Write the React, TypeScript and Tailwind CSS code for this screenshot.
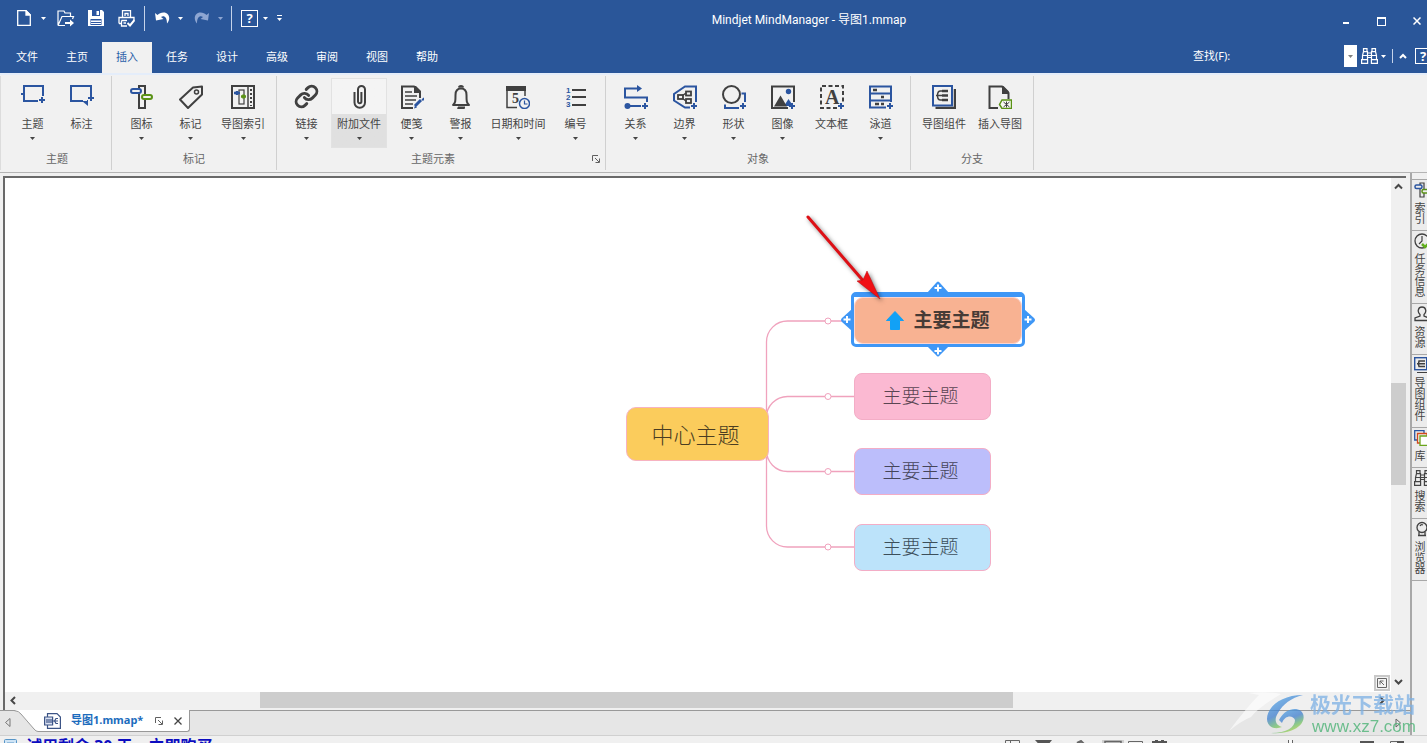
import type { ReactNode } from "react";
import { Link as LinkIcon } from "lucide-react";

const BLUE = "#2b55a0";
const DARK = "#404040";
const GREEN = "#5a9216";

function Caret({ className = "" }: { className?: string }) {
  return (
    <svg width="5" height="3" viewBox="0 0 5 3" className={className} aria-hidden="true">
      <path d="M0 0H5L2.500 3Z" fill="currentColor" />
    </svg>
  );
}

function Icon({ size = 24, children }: { size?: number; children: ReactNode }) {
  return (
    <svg
      width={size}
      height={size}
      viewBox={`0 0 ${size} ${size}`}
      fill="none"
      stroke={DARK}
      strokeWidth="2"
      className="shrink-0"
      aria-hidden="true"
    >
      {children}
    </svg>
  );
}

function Plus({ x = 21, y = 21 }: { x?: number; y?: number }) {
  return <path d={`M${x - 3} ${y}h6M${x} ${y - 3}v6`} stroke={BLUE} />;
}

const icons = {
  topic: (
    <Icon>
      <path d="M17 16H3V1H22V11M0 9h3" stroke={BLUE} />
      <Plus x={21} y={15} />
    </Icon>
  ),
  callout: (
    <Icon>
      <path d="M13 16H1V1H21V10M17 16h1" stroke={BLUE} />
      <path d="M12 16h6v5z" fill={BLUE} stroke="none" />
      <Plus x={21} y={13} />
    </Icon>
  ),
  marker: (
    <Icon>
      <path d="M9 5V1h6v8M9 8v15h6V15" />
      <rect x="1" y="4" width="10" height="4" rx="2" stroke={BLUE} />
      <rect x="12" y="10" width="10" height="4" rx="2" stroke={GREEN} />
    </Icon>
  ),
  tag: (
    <Icon>
      <path d="M23 1.500V9.500L9 23L1 14.500L14 2.500Z" strokeLinejoin="round" />
      <circle cx="17.500" cy="7" r="2" strokeWidth="1.500" />
    </Icon>
  ),
  mapIndex: (
    <Icon>
      <rect x="1" y="1" width="22" height="22" />
      <path d="M17 2v20" strokeWidth="1.500" />
      <path d="M20 4v17" strokeDasharray="2 2" />
      <rect x="8" y="5" width="5" height="14" strokeWidth="1.200" />
      <path d="M3 8h6M6 6v4" stroke={BLUE} strokeWidth="2.500" />
      <path d="M10 11.500h5M12.500 9.500v4" stroke={GREEN} strokeWidth="2.500" />
    </Icon>
  ),
  link: <LinkIcon size={25} strokeWidth={2.8} color={DARK} aria-hidden="true" />,
  clip: (
    <Icon>
      <path d="M7.500 7v10.500a5 5 0 0 0 10.500 0V4.500a3.500 3.500 0 0 0-7 0v12a1.700 1.700 0 0 0 3.400 0V7" />
    </Icon>
  ),
  note: (
    <Icon>
      <path d="M20 13V7.500L14 1.500H2V23H13" />
      <path d="M14 1h2l5 5v2h-7z" fill={DARK} stroke="none" />
      <path d="M5 7h7M5 11h12M5 15h11M5 19h8" strokeWidth="1.500" />
      <path d="M22.500 13.500l1.500 1.500M21 15l-6 6" stroke={BLUE} strokeWidth="3" />
      <path d="M14 23.500l1-3 2 2z" fill={BLUE} stroke="none" />
    </Icon>
  ),
  bell: (
    <Icon>
      <path d="M4 20H20C17.500 18 17.500 16 17.500 10C17.500 5.500 15.500 3.500 12 3.500C8.500 3.500 6.500 5.500 6.500 10C6.500 16 6.500 18 4 20Z" strokeLinejoin="round" />
      <path d="M10 2.500a2 1.500 0 0 1 4 0M9 22.500h6a3 1.500 0 0 1-6 0" fill={DARK} />
    </Icon>
  ),
  calendar: (
    <Icon>
      <path d="M0 1h20v5H0z" fill={DARK} stroke="none" />
      <path d="M1 6V22.500H11M19 6v5" strokeWidth="1.500" />
      <text x="6" y="18" fontSize="14" fontWeight="bold" fontFamily="Liberation Serif, serif" fill={DARK} stroke="none">5</text>
      <circle cx="18.500" cy="18.500" r="5" stroke={BLUE} strokeWidth="1.500" fill="#f1f1f1" />
      <path d="M18.500 15.500v3.500h3" stroke={BLUE} strokeWidth="1.200" />
    </Icon>
  ),
  numbering: (
    <Icon>
      <path d="M8 5H22M8 12H22M8 20H22" />
      <g fontSize="8" fontWeight="bold" fontFamily="Liberation Sans, sans-serif" fill={BLUE} stroke="none">
        <text x="2" y="8">1</text>
        <text x="2" y="15">2</text>
        <text x="2" y="22">3</text>
      </g>
    </Icon>
  ),
  relation: (
    <Icon>
      <path d="M14 3.500H1V12.500H23V17M4 21H17" stroke={BLUE} />
      <path d="M13 0l5 3.500l-5 3.500z" fill={BLUE} stroke="none" />
      <circle cx="3.500" cy="21" r="3" fill={BLUE} stroke="none" />
      <Plus />
    </Icon>
  ),
  boundary: (
    <Icon>
      <path d="M17 22.500H12L1 15.500V9L12 1.500H23V17" stroke={BLUE} />
      <rect x="5" y="10" width="5" height="4" strokeWidth="1.800" />
      <rect x="13" y="6.500" width="5" height="4" strokeWidth="1.800" />
      <rect x="13" y="14" width="5" height="4" strokeWidth="1.800" />
      <path d="M9 11l4-3M9 13l4 3" strokeWidth="1.500" />
      <Plus />
    </Icon>
  ),
  shape: (
    <Icon>
      <circle cx="9.500" cy="9.500" r="8.500" />
      <path d="M19.500 8.500H23V17M3 19.500V23H17" stroke={BLUE} />
      <Plus />
    </Icon>
  ),
  image: (
    <Icon>
      <path d="M17 23H1V1.500H23V17" />
      <circle cx="17.500" cy="6.500" r="2.700" fill={BLUE} stroke="none" />
      <path d="M13 21l4.500-7l4 6v1z" fill={BLUE} stroke="none" />
      <path d="M3 21.500L9.500 10.500L16 21.500Z" fill={DARK} stroke="none" />
      <Plus />
    </Icon>
  ),
  textBox: (
    <Icon>
      <path d="M17 23H1V1H23V17" strokeDasharray="4 2.500" />
      <text x="5" y="19" fontSize="20" fontWeight="bold" fontFamily="Liberation Serif, serif" fill={DARK} stroke="none">A</text>
      <Plus />
    </Icon>
  ),
  swimlane: (
    <Icon>
      <path d="M17 22.500H1V1.500H22V17M1 8.500H22M1 15.500H22" stroke={BLUE} />
      <path d="M4 5h4M12 12h3M6 19h4M12 19h3" strokeWidth="2.500" />
      <Plus />
    </Icon>
  ),
  mapParts: (
    <Icon>
      <path d="M3.500 23H23V4" strokeWidth="2.500" />
      <rect x="1" y="1" width="19" height="19.500" stroke={BLUE} />
      <path d="M10 6H8.500C6 6 5.500 8 5.500 10.500S6 15 8.500 15H10M4 10.500h6" strokeWidth="1.500" />
      <path d="M10 6h6M10 10.500h6M10 15h6" strokeWidth="2.500" />
    </Icon>
  ),
  insertMap: (
    <Icon>
      <path d="M10 23H1.500V1.500H14L20.500 8V14" />
      <path d="M14 1h1.500L21 6.500V9h-7z" fill={DARK} stroke="none" />
      <path d="M11.500 19.500l2.500-4.500h9.500v8.500H14z" stroke={GREEN} strokeWidth="1.500" fill="#f8fbf2" />
      <path d="M18.500 16.500v6M15.500 17l6 5M21.500 17l-6 5" strokeWidth="1" />
    </Icon>
  ),
};

type Tool = { label: string; icon: ReactNode; menu?: boolean; width: string; hot?: boolean };
const W2 = "w-[49px]";
const W4 = "w-[56px]";
const groups: { name: string; tools: Tool[]; launcher?: boolean }[] = [
  {
    name: "主题",
    tools: [
      { label: "主题", icon: icons.topic, menu: true, width: W2 },
      { label: "标注", icon: icons.callout, width: W2 },
    ],
  },
  {
    name: "标记",
    tools: [
      { label: "图标", icon: icons.marker, menu: true, width: W2 },
      { label: "标记", icon: icons.tag, menu: true, width: W2 },
      { label: "导图索引", icon: icons.mapIndex, menu: true, width: W4 },
    ],
  },
  {
    name: "主题元素",
    launcher: true,
    tools: [
      { label: "链接", icon: icons.link, menu: true, width: W2 },
      { label: "附加文件", icon: icons.clip, menu: true, width: W4, hot: true },
      { label: "便笺", icon: icons.note, menu: true, width: W2 },
      { label: "警报", icon: icons.bell, menu: true, width: W2 },
      { label: "日期和时间", icon: icons.calendar, menu: true, width: "w-[66px]" },
      { label: "编号", icon: icons.numbering, menu: true, width: W2 },
    ],
  },
  {
    name: "对象",
    tools: [
      { label: "关系", icon: icons.relation, menu: true, width: W2 },
      { label: "边界", icon: icons.boundary, menu: true, width: W2 },
      { label: "形状", icon: icons.shape, menu: true, width: W2 },
      { label: "图像", icon: icons.image, menu: true, width: W2 },
      { label: "文本框", icon: icons.textBox, width: W2 },
      { label: "泳道", icon: icons.swimlane, menu: true, width: W2 },
    ],
  },
  {
    name: "分支",
    tools: [
      { label: "导图组件", icon: icons.mapParts, width: W4 },
      { label: "插入导图", icon: icons.insertMap, width: W4 },
    ],
  },
];

function Launcher() {
  return (
    <svg width="8" height="8" viewBox="0 0 8 8" fill="none" stroke="#606060" aria-hidden="true">
      <path d="M0.500 6V0.500H6M3 3l4 4M7.500 3.500v4h-4" />
    </svg>
  );
}

function QuickAccess() {
  return (
    <div className="flex h-9 w-[290px] items-center pl-[10px]">
      <button aria-label="新建" className="flex w-7 justify-center">
        <svg width="14" height="16" viewBox="0 0 14 16" fill="none" stroke="#fff" strokeWidth="1.300" aria-hidden="true">
          <path d="M0.700 0.700H9L13.300 5V15.300H0.700Z" />
          <path d="M9 0.700V5H13.300Z" fill="#fff" />
        </svg>
      </button>
      <button aria-label="新建选项" className="flex w-[10px] justify-center"><Caret /></button>
      <button aria-label="打开" className="flex w-9 justify-center">
        <svg width="18" height="17" viewBox="0 0 18 17" fill="none" stroke="#fff" strokeWidth="1.200" aria-hidden="true">
          <path d="M1 15.500V1H7L8 3H13.500V6M1 15.500L5 6.500H16.500L15.500 9M1 15.500H8" />
          <path d="M8 12h5v-2.500l4 3.500l-4 3.500v-2.500H8z" fill="#fff" stroke="none" />
        </svg>
      </button>
      <button aria-label="保存" className="flex w-6 justify-center">
        <svg width="16" height="16" viewBox="0 0 16 16" aria-hidden="true">
          <path d="M0 0H14L16 2V16H0Z" fill="#fff" />
          <path d="M4 0H12V6H4ZM2.500 9H13.500V15H2.500Z" fill={BLUE} />
          <path d="M8.500 1h2.500v4h-2.500zM3 10.500h10v1.500H3zM3 13h10v1H3z" fill="#fff" />
        </svg>
      </button>
      <button aria-label="打印" className="flex w-9 justify-center">
        <svg width="17" height="17" viewBox="0 0 17 17" fill="none" stroke="#fff" strokeWidth="1.300" aria-hidden="true">
          <path d="M4.500 7V0.700H12.500V7M1 13.500V7.500H16V10M1 13.500H3M3.500 10.500H9M3.500 10.500V16H9M7 6V3.500H10V6M5.500 13H8" />
          <path d="M9.500 13l2.500 2.500L16.500 10" strokeWidth="2" />
        </svg>
      </button>
      <span className="mr-[3px] h-[25px] w-px bg-[#c5d3ea]" />
      <button aria-label="撤消" className="flex w-7 justify-center">
        <svg width="15" height="13" viewBox="0 0 15 13" aria-hidden="true">
          <path d="M0 1L1 8.500L8.500 7L6 5C9 3 12 5 12 11.500C16 7 14.500 0.500 8.500 0.500C6 0.500 4 1.500 2.500 3Z" fill="#fff" />
        </svg>
      </button>
      <button aria-label="撤消列表" className="flex w-2 justify-center"><Caret /></button>
      <button aria-label="重做" className="flex w-[34px] justify-center">
        <svg width="15" height="13" viewBox="0 0 15 13" aria-hidden="true">
          <path d="M15 1L14 8.500L6.500 7L9 5C6 3 3 5 3 11.500C-1 7 0.500 0.500 6.500 0.500C9 0.500 11 1.500 12.500 3Z" fill="#8ea6d2" />
        </svg>
      </button>
      <button aria-label="重做列表" className="flex w-1 justify-center text-[#8ea6d2]"><Caret className="shrink-0" /></button>
      <span className="mr-[9px] ml-[9px] h-[25px] w-px bg-[#c5d3ea]" />
      <button aria-label="帮助" className="grid h-[17px] w-[17px] place-items-center border border-white text-[13px] leading-[13px] font-bold">?</button>
      <button aria-label="帮助选项" className="flex w-[14px] justify-center"><Caret /></button>
      <button aria-label="自定义快速访问工具栏" className="flex w-[14px] flex-col items-center gap-[2px]">
        <span className="h-px w-[5px] bg-white" />
        <Caret />
      </button>
    </div>
  );
}

function Binoculars({ stroke }: { stroke: string }) {
  return (
    <svg width="17" height="16" viewBox="0 0 17 16" fill="none" stroke={stroke} strokeWidth="1.200" className="shrink-0" aria-hidden="true">
      <path d="M2.500 0.600h3.500v3h-3.500zM11 0.600h3.500v3h-3.500zM1.500 11.600v-4l1-4h4v8M15.500 11.600v-4l-1-4h-4v8M0.600 11.600h6v3.800h-6zM10.400 11.600h6v3.800h-6zM6.500 5h4v4.500h-4zM1.500 7.500h14" />
    </svg>
  );
}

const tabs = ["文件", "主页", "插入", "任务", "设计", "高级", "审阅", "视图", "帮助"];

function Header() {
  return (
    <header className="shrink-0 bg-[#2a5699] text-white">
      <div className="flex h-[42px] items-start">
        <QuickAccess />
        <h1 className="flex-1 pt-3 text-center font-['Roboto','Noto_Sans_CJK_SC',sans-serif] text-xs leading-4 font-normal">
          Mindjet MindManager - 导图1.mmap
        </h1>
        <div className="flex h-[42px] w-[107px] items-center">
          <button aria-label="最小化" className="flex w-9 justify-center pt-1"><span className="h-[2px] w-[6px] bg-white" /></button>
          <button aria-label="最大化" className="flex w-9 justify-center"><span className="h-[9px] w-[9px] border border-t-2 border-white" /></button>
          <button aria-label="关闭" className="flex w-9 justify-center">
            <svg width="8" height="8" viewBox="0 0 8 8" stroke="#fff" strokeWidth="1.500" aria-hidden="true"><path d="M0.500 0.500l7 7M7.500 0.500l-7 7" /></svg>
          </button>
        </div>
      </div>
      <div className="flex h-[31px] items-stretch justify-between">
        <nav className="flex pl-[2px] text-[11px]">
          {tabs.map((t) => (
            <button key={t} className={t === "插入" ? "w-[50px] bg-[#f1f1f1] pb-[1px] text-[#2a5ea8]" : "w-[50px] pb-[1px]"}>
              {t}
            </button>
          ))}
        </nav>
        <div className="flex items-center pb-[3px]">
          <label htmlFor="find" className="w-[47px] text-[11px]">查找(F):</label>
          <input id="find" className="h-[22px] w-[104px] bg-transparent px-1 text-[11px] outline-none" />
          <button aria-label="查找历史" className="flex h-[22px] w-[13px] items-center justify-center bg-white text-[#808080]"><Caret /></button>
          <button aria-label="查找" className="ml-1"><Binoculars stroke="#fff" /></button>
          <button aria-label="查找选项" className="ml-[3px]"><Caret /></button>
          <span className="mx-[6px] h-[14px] w-px bg-[#c5d3ea]" />
          <button aria-label="折叠功能区">
            <svg width="8" height="6" viewBox="0 0 8 6" fill="none" stroke="#fff" strokeWidth="2" aria-hidden="true"><path d="M1 5l3-3l3 3" /></svg>
          </button>
          <button aria-label="帮助主题" className="ml-2 grid h-4 w-4 place-items-center border border-white text-[13px] leading-[13px] font-bold">?</button>
          <span className="w-[4px]" />
        </div>
      </div>
    </header>
  );
}

function Ribbon() {
  return (
    <div className="flex h-[100px] shrink-0 border-t-2 border-b border-t-[#e4edfa] border-b-[#b4b4b4] bg-[#f1f1f1] pt-[1px] pb-[2px]">
      <div className="w-[3px] border-l border-[#dcdcdc]" />
      {groups.map((g) => (
        <section key={g.name} className="relative flex flex-col border-r border-[#d0d0d0] px-[5px]">
          <div className="flex pt-[2px]">
            {g.tools.map((t) => (
              <button
                key={t.label}
                className={
                  t.hot
                    ? `${t.width} flex h-[70px] flex-col items-center border border-[#e2e2e2] bg-linear-to-b from-[#f4f4f4] from-52% to-[#e0e0e0] to-52% text-[11px] text-[#444]`
                    : `${t.width} flex h-[70px] flex-col items-center border border-transparent text-[11px] text-[#444]`
                }
              >
                <span className="flex h-[37px] items-center justify-center pb-[2px]">{t.icon}</span>
                <span className="leading-4 whitespace-nowrap">{t.label}</span>
                {t.menu && <Caret className="mt-[5px]" />}
              </button>
            ))}
          </div>
          <div className={g.launcher ? "pt-[3px] pr-4 text-center text-[11px] leading-4 text-[#666]" : "pt-[3px] text-center text-[11px] leading-4 text-[#666]"}>
            {g.name}
          </div>
          {g.launcher && (
            <button aria-label="主题元素设置" className="absolute right-[5px] bottom-[7px] flex"><Launcher /></button>
          )}
        </section>
      ))}
    </div>
  );
}

const branches = [
  { top: "top-[195px]", color: "bg-[#fbb9d2]", text: "text-[#5a4552]" },
  { top: "top-[270px]", color: "bg-[#bcbefb]", text: "text-[#45455a]" },
  { top: "top-[346px]", color: "bg-[#bce3fa]", text: "text-[#3c4f5a]" },
];

function MindMap() {
  return (
    <div className="relative min-w-0 flex-1 overflow-hidden bg-white">
      <svg className="absolute inset-0 h-full w-full" fill="none" stroke="#f0a2bd" strokeWidth="1.300" aria-hidden="true">
        <path d="M761.500 256V164a21 21 0 0 1 21-21H846M761.500 256V240a21 21 0 0 1 21-21.500H849M761.500 256V272a21 21 0 0 0 21 21.500H849M761.500 256V348a21 21 0 0 0 21 21H849" />
        <g fill="#fff" strokeWidth="1">
          <circle cx="823" cy="143" r="3" />
          <circle cx="823" cy="218.500" r="3" />
          <circle cx="823" cy="293.500" r="3" />
          <circle cx="823" cy="369" r="3" />
        </g>
      </svg>
      <div className="absolute top-[229px] left-[621px] grid h-[54px] w-[143px] place-items-center rounded-[10px] border border-[#f7b3c1] bg-[#fbcc5c] pr-1 text-[22px] font-light text-[#4a3d22]">
        中心主题
      </div>
      <div className="absolute top-[114px] left-[846px] h-[55px] w-[174px] rounded-[5px] border-[3px] border-t-[5px] border-[#3f97f6] bg-white">
        <div className="flex h-full items-center justify-center gap-[9px] rounded-[9px] border border-[#fbd3cf] bg-[#f8b292] text-[19px] font-bold text-[#463b36]">
          <svg width="18" height="19" viewBox="0 0 18 19" aria-hidden="true">
            <path d="M9 0.500L17.500 9.500H13.500V18.500H4.500V9.500H0.500Z" fill="#12a1f6" stroke="#12a1f6" strokeLinejoin="round" />
          </svg>
          主要主题
        </div>
      </div>
      {branches.map((b) => (
        <div
          key={b.top}
          className={`${b.top} ${b.color} ${b.text} absolute left-[849px] grid h-[47px] w-[137px] place-items-center rounded-[8px] border border-[#f3adc6] pr-1 text-[19px] font-light`}
        >
          主要主题
        </div>
      ))}
      <svg className="absolute inset-0 h-full w-full" fill="none" aria-hidden="true">
        <g fill="#3f97f6">
          <path d="M922 115L931 105Q933 102 935 105L944 115Z" />
          <path d="M922 168L931 177Q933 180 935 177L944 168Z" />
          <path d="M847 131L837 140Q835 142 837 144L847 153Z" />
          <path d="M1019 131L1029 140Q1031 142 1029 144L1019 153Z" />
        </g>
        <path d="M929.500 110h7M933 106.500v7M929.500 173h7M933 169.500v7M838.500 141.500h7M842 138v7M1019.500 141.500h7M1023 138v7" stroke="#fff" strokeWidth="2" />
        <g className="drop-shadow-[2px_2px_2px_rgba(0,0,0,0.5)]">
          <path d="M803 39L861 106" stroke="#dd1016" strokeWidth="3" strokeLinecap="round" />
          <path d="M875 121L852 103L858 102L862 93Z" fill="#f01015" stroke="#b80d10" strokeWidth="0.500" />
        </g>
      </svg>
      <button aria-label="缩略视图" className="absolute right-[1px] bottom-[1px] grid h-4 w-4 place-items-center border-2 border-[#c9c9c9] bg-[#f4f4f4]">
        <svg width="10" height="10" viewBox="0 0 10 10" fill="none" stroke="#666" aria-hidden="true"><path d="M0.500 0.500h9v9h-9zM3 6.500V3H6.500M3 3l4 4" /></svg>
      </button>
    </div>
  );
}

function Chevron({ d }: { d: string }) {
  return (
    <svg width="9" height="9" viewBox="0 0 9 9" fill="none" stroke="#484848" strokeWidth="2" className="shrink-0" aria-hidden="true">
      <path d={d} />
    </svg>
  );
}

function DocTabs() {
  return (
    <div className="flex h-[25px] shrink-0 border-t border-[#999] bg-[#e6e6e6]">
      <svg width="38" height="22" viewBox="0 0 38 22" fill="none" className="-mt-px shrink-0" aria-hidden="true">
        <path d="M14 0L20 3L34 19Q36 21.500 38 21.500V0Z" fill="#fff" />
        <path d="M14 0.500Q19 1 21 4L34 19Q36 21.500 38 21.500" stroke="#999" />
        <path d="M10 8.500V16.500L5.500 12.500Z" stroke="#777" />
      </svg>
      <div className="-mt-px flex h-[22px] items-center rounded-br-[3px] border-r border-b border-[#999] bg-white pr-[7px] pl-[6px]">
        <svg width="17" height="16" viewBox="0 0 17 16" fill="none" stroke="#3c5486" strokeWidth="1.200" aria-hidden="true">
          <path d="M3.500 4V0.600H13L16.400 4V15.400H3.500V12" />
          <path d="M0.600 4h8v8h-8z" fill="#dbe2f2" />
          <path d="M3 6v4M5 6v4M7 6v4M14 5.500h-2l-1.500 2.500l1.500 2.500h2M9 8h5" />
        </svg>
        <span className="ml-[10px] text-[11px] font-bold text-[#1c6cbd]">导图1.mmap*</span>
        <button aria-label="弹出窗口" className="ml-[12px]"><Launcher /></button>
        <button aria-label="关闭导图" className="ml-[11px]">
          <svg width="8" height="8" viewBox="0 0 8 8" stroke="#444" strokeWidth="1.300" aria-hidden="true"><path d="M0.500 0.500l7 7M7.500 0.500l-7 7" /></svg>
        </button>
      </div>
      <svg width="8" height="10" viewBox="0 0 8 10" fill="none" stroke="#666" className="mt-[7px] mr-[7px] ml-auto" aria-hidden="true">
        <path d="M1 1V9L5.500 5Z" />
      </svg>
    </div>
  );
}

const panes: { label: string; icon: ReactNode }[] = [
  {
    label: "索引",
    icon: (
      <Icon size={16}>
        <path d="M6 3V1h4v6M6 7v8h4v-4" strokeWidth="1.200" />
        <rect x="1" y="3" width="7" height="3.500" rx="1.500" stroke={BLUE} strokeWidth="1.500" />
        <rect x="8" y="7.500" width="7" height="3.500" rx="1.500" stroke={GREEN} strokeWidth="1.500" />
      </Icon>
    ),
  },
  {
    label: "任务信息",
    icon: (
      <Icon size={16}>
        <circle cx="8" cy="8" r="7" strokeWidth="1.300" />
        <path d="M8 3v5l-3 3" strokeWidth="1.200" />
        <path d="M8 11l3 3l5-5" stroke="#62b01e" strokeWidth="2.500" />
      </Icon>
    ),
  },
  {
    label: "资源",
    icon: (
      <Icon size={16}>
        <path d="M1 14.500H15V12L10 10V8.500C13 6 12 1 8 1S3 6 6 8.500V10L1 12Z" strokeWidth="1.300" />
      </Icon>
    ),
  },
  {
    label: "导图组件",
    icon: (
      <Icon size={16}>
        <path d="M3 15.500H15.500V3" strokeWidth="1.200" />
        <rect x="0.700" y="0.700" width="12" height="12" stroke={BLUE} strokeWidth="1.400" />
        <path d="M7 4H5Q4 7 5 9.500H7M3 6.800H7M7 4h4M7 6.800h4M7 9.500h4" strokeWidth="1.500" />
      </Icon>
    ),
  },
  {
    label: "库",
    icon: (
      <Icon size={16}>
        <path d="M0.700 0.700H10V10H0.700Z" stroke={BLUE} strokeWidth="1.300" />
        <path d="M3.500 3.500H13V13H3.500Z" stroke="#d24a1c" strokeWidth="1.300" fill="#eee" />
        <path d="M6 6H16V15.300H6Z" stroke="#6aa51c" strokeWidth="1.300" fill="#fff" />
      </Icon>
    ),
  },
  { label: "搜索", icon: <Binoculars stroke="#444" /> },
  {
    label: "浏览器",
    icon: (
      <Icon size={16}>
        <circle cx="8" cy="6.500" r="5" strokeWidth="1.300" />
        <path d="M4 14.500h8M5 11v3M11 11v3M6 5q1-2 3-1" strokeWidth="1.300" />
      </Icon>
    ),
  },
];

function SidePanes() {
  return (
    <aside className="flex w-[25px] shrink-0 flex-col border-l-2 border-[#a8a8a8] bg-[#f0f0f0] pt-[6px]">
      {panes.map((p) => (
        <button key={p.label} className="flex flex-col items-start gap-[4px] border-t border-[#a8a8a8] bg-[#ececec] pt-[2px] pb-[6px] pl-[2px]">
          <span className="flex h-4">{p.icon}</span>
          <span className="text-[11px] leading-[11px] text-[#444] [writing-mode:vertical-rl]">{p.label}</span>
        </button>
      ))}
      <div className="flex-1 border-t border-[#a8a8a8]" />
    </aside>
  );
}

function StatusBar() {
  return (
    <footer className="flex h-6 shrink-0 items-start overflow-hidden border-t border-[#d0d0d0] bg-[#f0f0f0] pl-1">
      <svg width="13" height="13" viewBox="0 0 13 13" fill="none" stroke="#5795c7" className="mt-[3px]" aria-hidden="true">
        <rect x="0.500" y="0.500" width="12" height="12" rx="1" fill="#cfe4f5" />
        <path d="M3 4h7M3 7h7" />
      </svg>
      <a href="#buy" className="ml-[9px] text-[16px] leading-[20px] font-bold text-[#0c0cc0]">试用剩余 30 天，立即购买</a>
      <div className="mt-1 mr-[29px] ml-auto flex items-start text-[#555]">
        <svg width="402" height="20" viewBox="0 0 402 20" fill="none" stroke="#666" aria-hidden="true">
          <path d="M1.500 0.500h14v13h-14zM6.500 0.500v13M2 4.500h14" />
          <path d="M31 0h17l-8 10z" fill="#555" stroke="none" />
          <path d="M73 3l4-2l5 5M70 8l6-6" strokeWidth="2" />
          <path d="M98 -2h22v18h-22z" fill="#cfcfcf" stroke="none" />
          <path d="M101 1.500h16v11h-16z" strokeWidth="1.500" />
          <path d="M124.500 1.500h14v11h-14z" />
          <path d="M148 1h3v-1h3v1h3v-1h3v1h3v12h-15z" fill="#555" stroke="none" />
          <text x="178" y="11" fontSize="11" fontFamily="Noto Sans, sans-serif" fill="#333" stroke="none">110%</text>
          <path d="M284.500 -0.500h4v12h-4z" fill="#f8f8f8" />
          <path d="M356 1h14v8h-14z" fill="#555" stroke="none" />
          <path d="M386.500 1.500h13v9h-13z" />
          <path d="M393 1h7v5h-7z" fill="#555" stroke="none" />
        </svg>
      </div>
    </footer>
  );
}

function SiteMark() {
  return (
    <div className="pointer-events-none absolute right-[11px] bottom-[6px] flex items-end opacity-75">
      <svg width="84" height="48" viewBox="0 0 84 48" aria-hidden="true">
        <defs>
          <linearGradient id="swirl" x1="0" y1="0" x2="0.600" y2="1">
            <stop offset="0" stopColor="#5ab4ee" />
            <stop offset="0.550" stopColor="#3f7fd0" />
            <stop offset="0.800" stopColor="#6fc06a" />
            <stop offset="1" stopColor="#b5d64a" />
          </linearGradient>
        </defs>
        <path d="M0 42Q18 18 30 6L20 4Q38 2 52 5Q30 18 22 28Q12 32 0 42Z" fill="#fff" opacity="0.800" />
        <path d="M74 6C52 6 38 18 38 30C38 38 46 41 53 38C46 36 45 30 49 24C54 15 62 9 74 6Z" fill="url(#swirl)" />
        <path d="M50 31C56 20 66 18 72 22C80 30 70 46 42 44C58 44 66 38 66 31C64 26 56 26 53 34Z" fill="url(#swirl)" />
      </svg>
      <div className="-ml-[3px] flex flex-col">
        <span className="text-[21px] leading-[25px] font-bold text-[#7cb0e4]">极光下载站</span>
        <span className="pl-[2px] font-['Liberation_Sans',sans-serif] text-[17px] leading-[20px] text-[#44b070]">www.xz7.com</span>
      </div>
    </div>
  );
}

export default function App() {
  return (
    <div className="relative h-screen w-full overflow-hidden bg-[#f0f0f0] font-['Noto_Sans','Noto_Sans_CJK_SC',sans-serif]">
      <div className="flex h-[calc(100%+16px)] w-[calc(100%+8px)] flex-col">
        <Header />
        <Ribbon />
        <div className="flex min-h-0 flex-1">
          <main className="flex min-w-0 flex-1 flex-col pt-[3px]">
            <div className="mr-[4px] ml-[3px] flex min-h-0 flex-1 flex-col border-t-2 border-l-2 border-[#696969] pb-[2px]">
              <div className="flex min-h-0 flex-1">
                <MindMap />
                <div className="flex w-[15px] flex-col items-center bg-[#f0f0f0] pt-1 pb-[6px]">
                  <Chevron d="M1 6.500l3.500-3.500l3.500 3.500" />
                  <div className="flex w-full flex-1 flex-col">
                    <div className="grow-[192]" />
                    <div className="grow-[103] bg-[#cdcdcd]" />
                    <div className="grow-[192]" />
                  </div>
                  <Chevron d="M1 3l3.500 3.500l3.500-3.500" />
                </div>
              </div>
              <div className="flex h-4 items-center bg-[#f0f0f0] pr-[20px] pl-[3px]">
                <Chevron d="M7 1L3.500 4.500L7 8" />
                <div className="flex h-full flex-1">
                  <div className="grow-[243]" />
                  <div className="grow-[754] bg-[#cdcdcd]" />
                  <div className="grow-[364]" />
                </div>
                <Chevron d="M3 1l3.500 3.500L3 8" />
              </div>
            </div>
            <DocTabs />
          </main>
          <SidePanes />
        </div>
        <StatusBar />
      </div>
      <SiteMark />
    </div>
  );
}
